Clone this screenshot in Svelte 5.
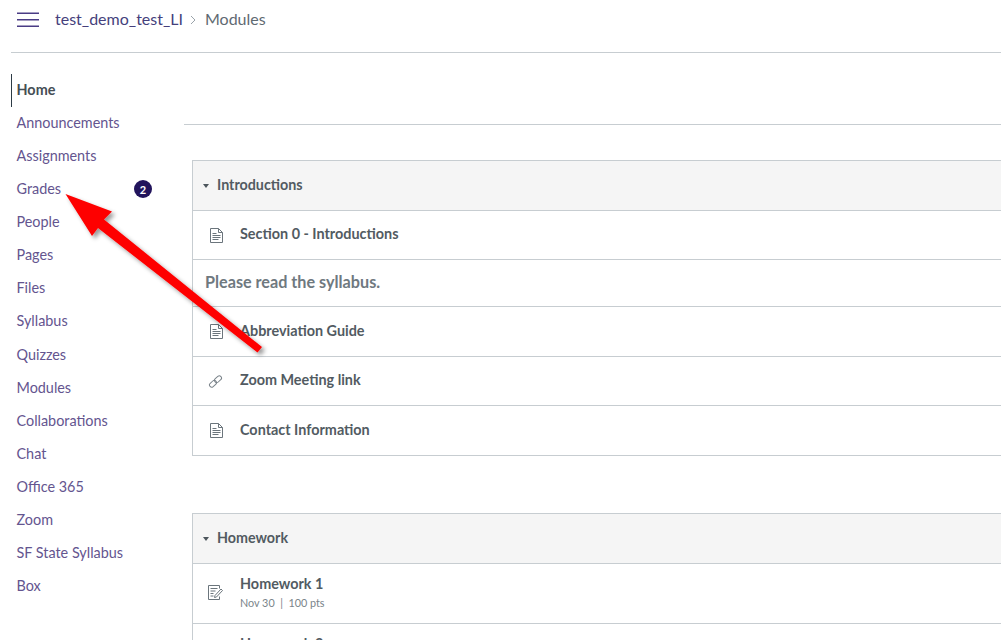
<script>
	const nav = [
		'Announcements',
		'Assignments',
		'Grades',
		'People',
		'Pages',
		'Files',
		'Syllabus',
		'Quizzes',
		'Modules',
		'Collaborations',
		'Chat',
		'Office 365',
		'Zoom',
		'SF State Syllabus',
		'Box'
	];

	const intro = [
		{ kind: 'page', title: 'Section 0 - Introductions', h: 49 },
		{ kind: 'head', title: 'Please read the syllabus.', h: 47 },
		{ kind: 'page', title: 'Abbreviation Guide', h: 50 },
		{ kind: 'link', title: 'Zoom Meeting link', h: 49 },
		{ kind: 'page', title: 'Contact Information', h: 50 }
	];
</script>

{#snippet pageIcon()}
	<span class="icon-box">
		<svg class="page-icon" viewBox="0 0 13 15" width="13" height="15" fill="none" stroke="#6b757c" stroke-width="1">
			<path d="M.5.5h8l4 4v10h-12z" />
			<path d="M8.500.5v4h4M2.500 5.500h4M2.500 7.500h8M2.500 9.500h8M2.500 11.500h6" />
		</svg>
	</span>
{/snippet}

{#snippet linkIcon()}
	<span class="icon-box">
		<svg viewBox="0 0 15 15" width="15" height="15" fill="none" stroke="#7a838a" stroke-width="1">
			<g transform="rotate(-42 7.500 7.500)">
				<rect x="0.200" y="5.300" width="7.800" height="4.400" rx="2.200" />
				<rect x="7" y="5.300" width="7.800" height="4.400" rx="2.200" />
			</g>
		</svg>
	</span>
{/snippet}

{#snippet assignIcon()}
	<span class="icon-box up">
		<svg viewBox="0 0 15 15" width="15" height="15" fill="none" stroke="#6b757c" stroke-width="1">
			<path d="M11.500 3.500v-3h-11v14h11v-3" />
			<path d="M2.500 3.500h7M2.500 6h5M2.500 8.500h3M2.500 11h3" />
			<path d="M7 10.500l6-6.500 1.500 1.500-6 6.500-2 .5z" />
		</svg>
	</span>
{/snippet}

<div class="page">
	<header>
		<svg class="burger" viewBox="0 0 22 16" width="22" height="16" stroke="#4a3c85" stroke-width="1.500">
			<path d="M0 2.250h22M0 8.750h22M0 15.250h22" />
		</svg>
		<a href="#a" class="crumb">test_demo_test_LI</a>
		<svg class="sep" viewBox="0 0 6 10" width="6" height="10" fill="none" stroke="#9aa3aa" stroke-width="1"><path d="M1 1l4 4-4 4" /></svg>
		<span class="crumb current">Modules</span>
	</header>

	<div class="body">
		<nav>
			<a href="#a" class="item active"><span>Home</span></a>
			{#each nav as label}
				<a href="#a" class="item">
					<span>{label}</span>
					{#if label === 'Grades'}<span class="badge">2</span>{/if}
				</a>
			{/each}
		</nav>

		<main>
			<div class="toolbar"></div>

			<section>
				<div class="mod-head"><span class="caret"></span><span class="lift">Introductions</span></div>
				{#each intro as row}
					<div class="row" style="height: {row.h}px">
						{#if row.kind === 'head'}
							<span class="subhead lift">{row.title}</span>
						{:else}
							{#if row.kind === 'page'}{@render pageIcon()}{:else}{@render linkIcon()}{/if}
							<span class="title lift">{row.title}</span>
						{/if}
					</div>
				{/each}
			</section>

			<section class="second">
				<div class="mod-head"><span class="caret"></span><span class="lift">Homework</span></div>
				<div class="row tall">
					{@render assignIcon()}
					<div class="stack">
						<div class="title">Homework 1</div>
						<div class="meta">Nov 30 &nbsp;|&nbsp; 100 pts</div>
					</div>
				</div>
				<div class="row tall">
					{@render assignIcon()}
					<div class="stack">
						<div class="title">Homework 2</div>
						<div class="meta">Dec 7 &nbsp;|&nbsp; 100 pts</div>
					</div>
				</div>
			</section>
		</main>
	</div>

	<svg class="arrow" width="300" height="370" viewBox="0 0 300 370">
		<defs>
			<filter id="shade" x="-10%" y="-10%" width="120%" height="120%">
				<feDropShadow dx="3" dy="3" stdDeviation="2" flood-color="#000" flood-opacity="0.4" />
			</filter>
		</defs>
		<path
			filter="url(#shade)"
			fill="#fe0000"
			d="M65.500 194 L112 211.500 L104 219.500 L262 347 L257.500 352.500 L98 228 L92 236 Z"
		/>
	</svg>
</div>

<style>
	:global(body) {
		margin: 0;
		background: #fff;
		overflow: hidden;
	}

	.page {
		position: relative;
		width: 1001px;
		height: 640px;
		overflow: hidden;
		font-family: Lato, 'Open Sans', sans-serif;
		color: #2d3b45;
	}

	header {
		display: flex;
		align-items: center;
		height: 38px;
		margin-left: 11px;
		padding: 0 0 14px 6px;
		border-bottom: 1px solid #c7cdd1;
	}

	.burger {
		flex: none;
		margin-right: 16px;
	}

	.crumb {
		font-size: 16px;
		color: #453f7c;
		text-decoration: none;
		margin-bottom: 2px;
	}

	.current {
		color: #5f6a72;
	}

	.sep {
		margin: 1px 9px 0 7px;
	}

	.body {
		display: flex;
	}

	nav {
		display: flex;
		flex-direction: column;
		width: 173px;
		margin: 21px 0 0 11px;
		flex: none;
	}

	.item {
		display: flex;
		align-items: center;
		height: 33.07px;
		box-sizing: border-box;
		padding: 0 0 2px 5.5px;
		font-size: 14.4px;
		color: #64558f;
		text-decoration: none;
		position: relative;
	}

	.active {
		font-weight: 700;
		color: #454e55;
		border-left: 1px solid #2d3b45;
		padding-left: 4.5px;
	}

	.badge {
		position: absolute;
		left: 123px;
		top: 7px;
		width: 18px;
		height: 18px;
		border-radius: 50%;
		background: #22145c;
		color: #fff;
		font-size: 11px;
		font-weight: 700;
		display: flex;
		align-items: center;
		justify-content: center;
	}

	main {
		flex: 1;
		min-width: 0;
	}

	.toolbar {
		height: 71px;
		border-bottom: 1px solid #c7cdd1;
		margin-bottom: 35px;
	}

	section {
		margin-left: 8px;
		border: 1px solid #c7cdd1;
		border-right: 0;
		border-bottom: 0;
	}

	.second {
		margin-top: 57px;
	}

	.mod-head {
		display: flex;
		align-items: center;
		height: 49px;
		padding-left: 10px;
		background: #f5f5f5;
		border-bottom: 1px solid #c7cdd1;
		font-size: 14.3px;
		font-weight: 700;
		color: #525b62;
	}

	.caret {
		width: 0;
		height: 0;
		border-left: 3px solid transparent;
		border-right: 3px solid transparent;
		border-top: 4px solid #4c555c;
		margin-right: 8px;
	}

	.lift {
		margin-bottom: 3px;
	}

	.row {
		display: flex;
		align-items: center;
		box-sizing: border-box;
		padding-left: 15px;
		border-bottom: 1px solid #c7cdd1;
	}

	.tall {
		height: 60px;
	}

	.icon-box {
		flex: none;
		width: 32px;
		display: flex;
		align-items: center;
	}

	.up {
		margin-bottom: 2px;
	}

	.page-icon {
		margin-left: 2px;
	}

	.stack {
		padding-bottom: 4px;
	}

	.title {
		font-size: 14.4px;
		font-weight: 700;
		color: #525b62;
	}

	.subhead {
		font-size: 16.2px;
		font-weight: 700;
		color: #6f797f;
		margin-left: -3px;
	}

	.meta {
		font-size: 10.8px;
		color: #7a848a;
		margin-top: 4px;
	}

	.arrow {
		position: absolute;
		left: 0;
		top: 0;
		pointer-events: none;
	}
</style>
